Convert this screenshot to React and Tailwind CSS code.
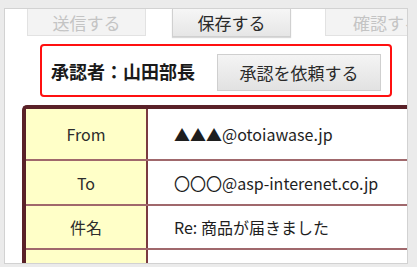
import React from 'react';

const jp = { fontFamily: '"Noto Sans CJK JP", "Noto Sans", sans-serif' };

const rows = [
  { label: 'From', value: '▲▲▲@otoiawase.jp', h: 'h-[50px]' },
  { label: 'To', value: '〇〇〇@asp-interenet.co.jp', h: 'h-[43px]' },
  { label: '件名', value: 'Re: 商品が届きました', h: 'h-[42px]' },
  { label: '', value: '', h: 'h-[40px]' },
];

export default function App() {
  return (
    <div className="w-[417px] h-[267px] bg-[#ebebeb] overflow-hidden pt-[8px] pl-[4px]" style={jp}>
      <div className="w-[404px] h-[256px] bg-white border border-[#d2d2d2] overflow-hidden">
        {/* tabs */}
        <div className="flex items-start h-[28px]">
          <div className="shrink-0 ml-[22px] w-[119px] h-[27px] flex items-center justify-center bg-[#f3f3f3] border-l border-r border-b border-[#e2e2e2] text-[17px] leading-none text-[#c4c4c4]">
            送信する
          </div>
          <div className="shrink-0 ml-[26px] w-[119px] h-[28px] flex items-center justify-center bg-gradient-to-b from-[#f6f6f6] to-[#e6e6e6] border-l border-r border-b border-[#d0d0d0] shadow-[0_1px_1px_rgba(0,0,0,0.15)] text-[17px] leading-none text-[#2a2a2a]">
            保存する
          </div>
          <div className="shrink-0 ml-[34px] w-[119px] h-[27px] flex items-center pl-[27px] bg-[#f3f3f3] border-l border-b border-[#e2e2e2] text-[17px] leading-none text-[#c4c4c4]">
            確認する
          </div>
        </div>

        {/* approval box */}
        <div className="ml-[35px] mt-[7px] w-[352px] h-[53px] border-2 border-[#ff1010] rounded-[4px] flex items-center justify-between pl-[9px] pr-[9px]">
          <span className="text-[18px] font-bold text-[#1a1a1a] leading-none">承認者：山田部長</span>
          <button className="w-[164px] h-[37px] mt-[4px] bg-gradient-to-b from-[#f4f4f4] to-[#e2e2e2] border border-[#cfcfcf] text-[17px] text-[#2a2a2a] leading-none">
            承認を依頼する
          </button>
        </div>

        {/* mail table */}
        <div className="ml-[17px] mt-[8px] w-[420px] border-t-4 border-l-4 border-[#5a2128] rounded-tl-[5px]">
          {rows.map((r, i) => (
            <div key={i}>
              <div className={`flex ${r.h}`}>
                <div className="w-[120px] bg-[#ffffc8] flex items-center justify-center text-[16px] text-[#2c2c2c]">
                  {r.label}
                </div>
                <div className="w-[2px] bg-[#7a3a40]" />
                <div className="flex-1 flex items-center pl-[26px] text-[16px] text-[#1e1e1e] whitespace-nowrap">
                  {r.value}
                </div>
              </div>
              {i < rows.length - 1 && <div className="h-[2px] bg-[#a0686c]" />}
            </div>
          ))}
        </div>
      </div>
    </div>
  );
}
